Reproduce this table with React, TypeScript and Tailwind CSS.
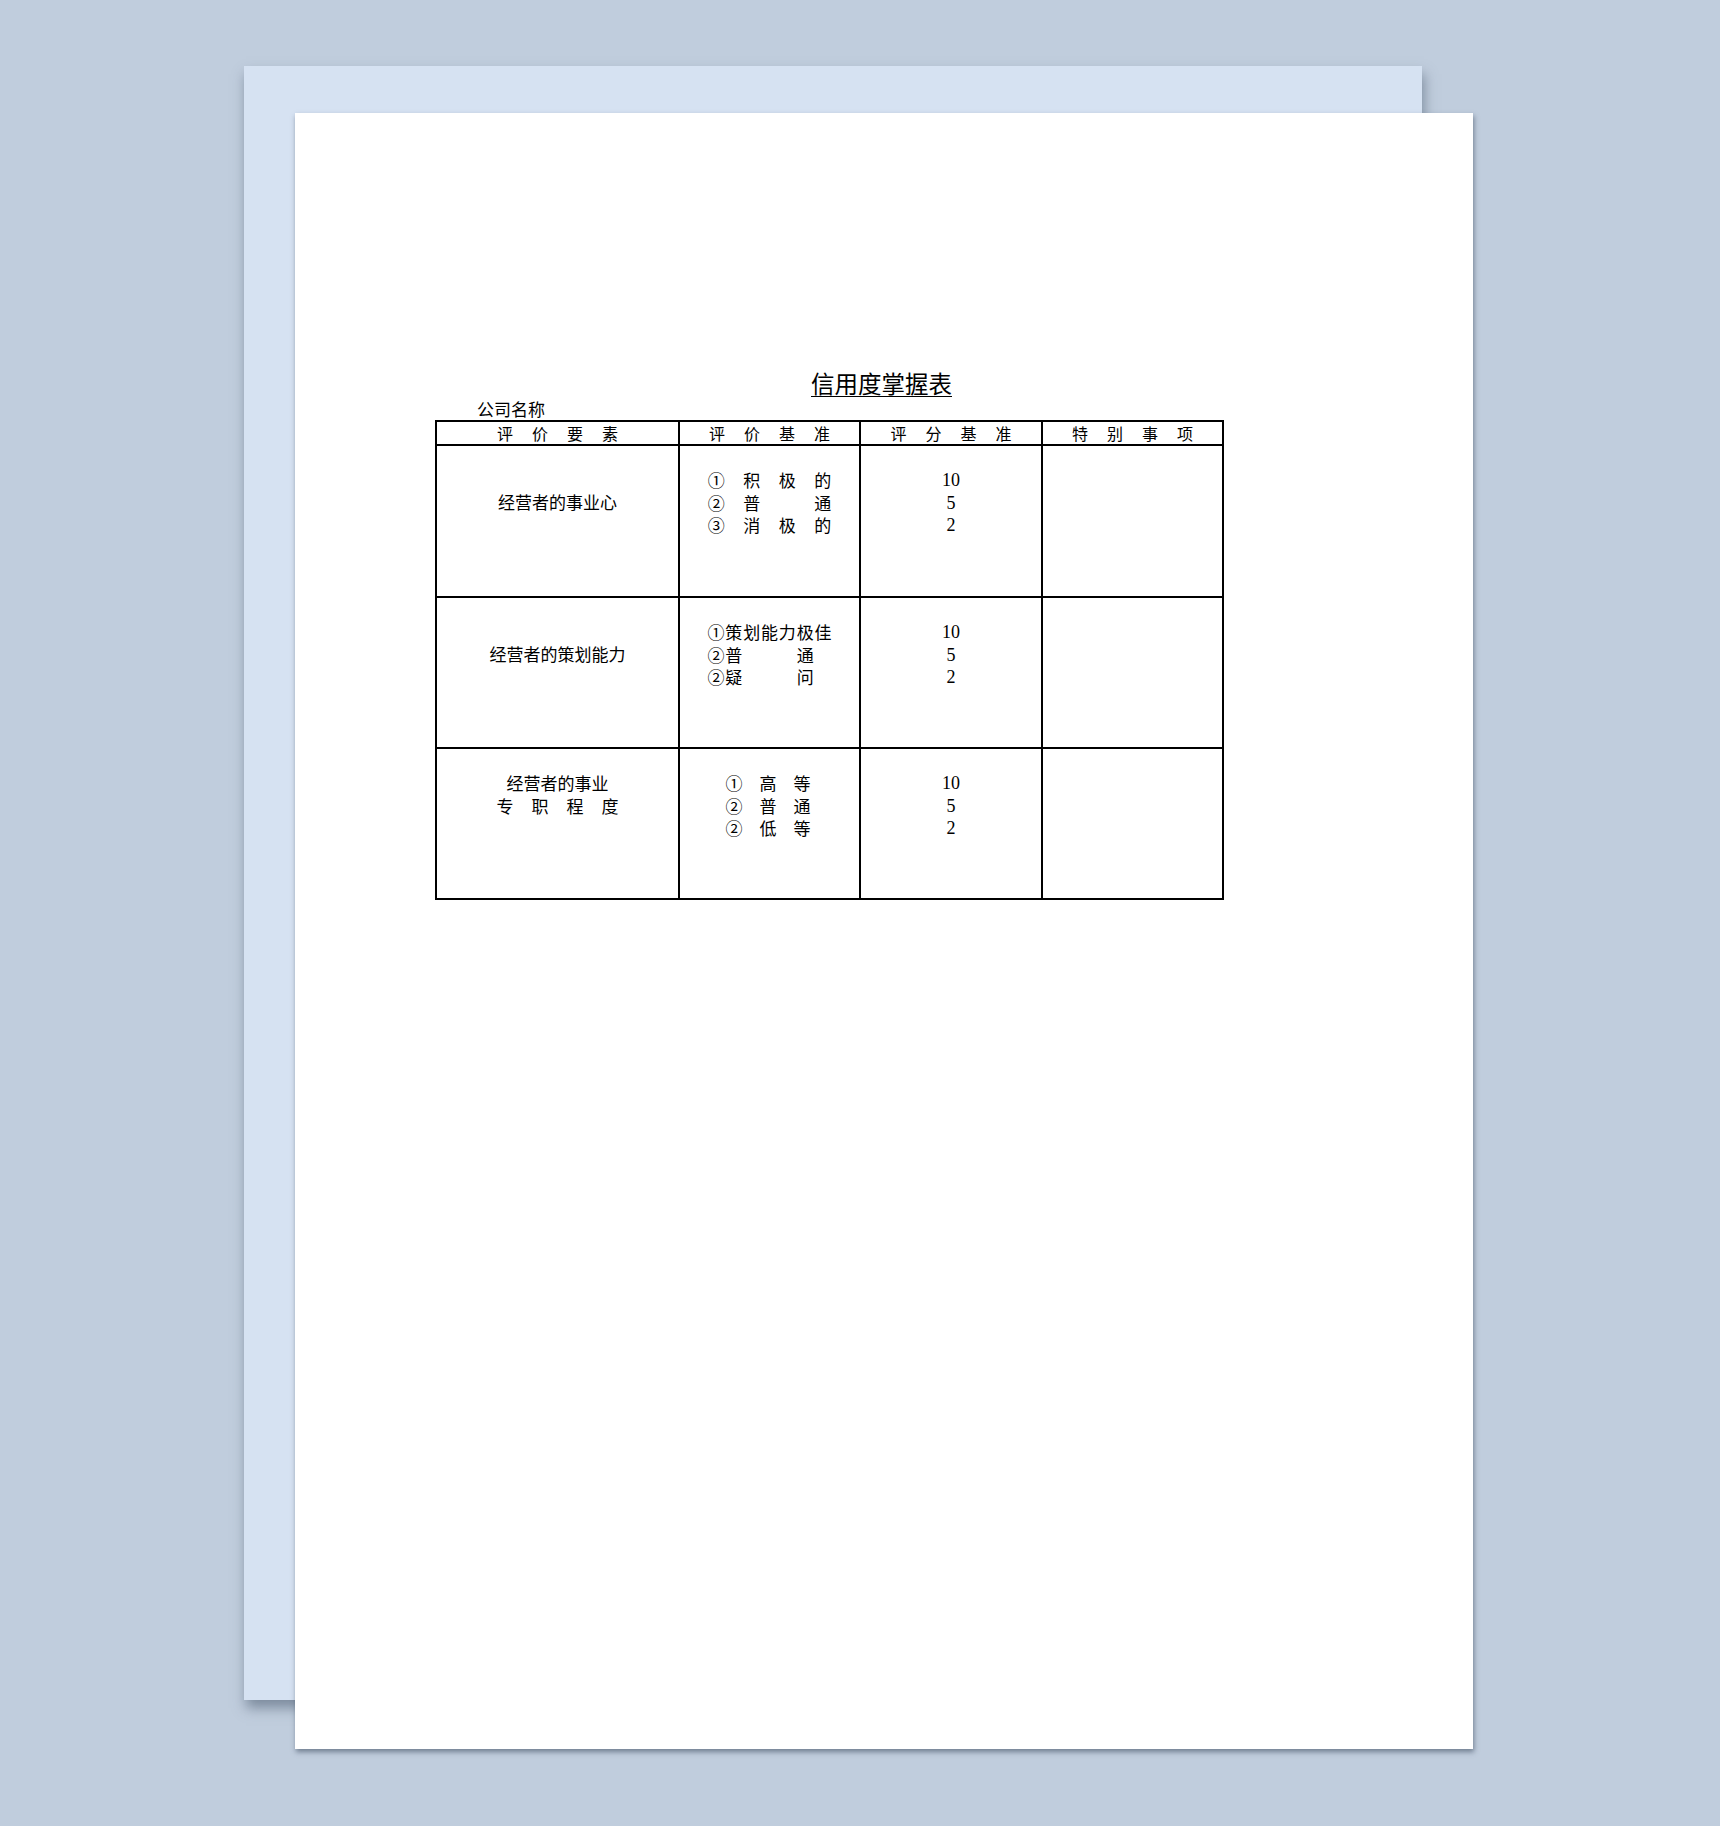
import React from "react";

const CJK = "font-['Noto_Sans_CJK_SC',sans-serif]";
const NUM = "font-['Liberation_Serif','Noto_Sans_CJK_SC',serif]";

function Spaced({ chars, cell, gap }: { chars: string[]; cell: string; gap: string }) {
  return (
    <div className={`flex ${gap}`}>
      {chars.map((c, i) => (
        <span key={i} className={`${cell} text-center`}>
          {c}
        </span>
      ))}
    </div>
  );
}

function Header({ text }: { text: string }) {
  return (
    <div className="h-[24px] border-r-2 border-b-2 border-black flex items-center justify-center text-[16px] leading-[22px]">
      <Spaced chars={text.split("")} cell="w-[16px]" gap="gap-[19px]" />
    </div>
  );
}

function Numbers({ pt }: { pt: string }) {
  return (
    <div className={`flex flex-col items-center ${pt} ${NUM} text-[18px] leading-[22.5px]`}>
      <div>10</div>
      <div>5</div>
      <div>2</div>
    </div>
  );
}

export default function App() {
  return (
    <div className={`w-[1720px] h-[1826px] bg-[#c0cddd] pt-[66px] pl-[244px] ${CJK} text-black`}>
      <div className="relative w-[1178px] h-[1634px] bg-[#d6e2f2] shadow-[2px_8px_12px_rgba(70,85,105,0.55)]">
        <div className="absolute left-[51px] top-[47px] w-[1178px] h-[1636px] bg-white shadow-[1px_3px_5px_rgba(60,75,95,0.6)] pl-[140px] pt-[256px]">
          <div className="ml-[376px] text-[23.5px] leading-[28px] underline underline-offset-[3px] decoration-1">
            信用度掌握表
          </div>
          <div className="ml-[42px] mt-[1px] text-[17px] leading-[22px]">公司名称</div>
          <div className="grid grid-cols-[243px_181px_182px_181px] w-[789px] border-l-2 border-t-2 border-black text-[17px] leading-[22.5px]">
            <Header text="评价要素" />
            <Header text="评价基准" />
            <Header text="评分基准" />
            <Header text="特别事项" />

            {/* Row 1 */}
            <div className="h-[152px] border-r-2 border-b-2 border-black flex justify-center pt-[45px]">
              <div>经营者的事业心</div>
            </div>
            <div className="h-[152px] border-r-2 border-b-2 border-black flex flex-col items-center pt-[23px]">
              <Spaced chars={["①", "积", "极", "的"]} cell="w-[17.5px]" gap="gap-[18px]" />
              <Spaced chars={["②", "普", "", "通"]} cell="w-[17.5px]" gap="gap-[18px]" />
              <Spaced chars={["③", "消", "极", "的"]} cell="w-[17.5px]" gap="gap-[18px]" />
            </div>
            <div className="h-[152px] border-r-2 border-b-2 border-black">
              <Numbers pt="pt-[23px]" />
            </div>
            <div className="h-[152px] border-r-2 border-b-2 border-black" />

            {/* Row 2 */}
            <div className="h-[151px] border-r-2 border-b-2 border-black flex justify-center pt-[45px]">
              <div>经营者的策划能力</div>
            </div>
            <div className="h-[151px] border-r-2 border-b-2 border-black flex flex-col items-center pt-[23px]">
              <Spaced chars={["①", "策", "划", "能", "力", "极", "佳"]} cell="w-[17.86px]" gap="gap-0" />
              <Spaced chars={["②", "普", "", "", "", "通", ""]} cell="w-[17.86px]" gap="gap-0" />
              <Spaced chars={["②", "疑", "", "", "", "问", ""]} cell="w-[17.86px]" gap="gap-0" />
            </div>
            <div className="h-[151px] border-r-2 border-b-2 border-black">
              <Numbers pt="pt-[23px]" />
            </div>
            <div className="h-[151px] border-r-2 border-b-2 border-black" />

            {/* Row 3 */}
            <div className="h-[151px] border-r-2 border-b-2 border-black flex flex-col items-center pt-[23px]">
              <div>经营者的事业</div>
              <Spaced chars={["专", "职", "程", "度"]} cell="w-[17px]" gap="gap-[18px]" />
            </div>
            <div className="h-[151px] border-r-2 border-b-2 border-black flex flex-col items-center pt-[23px] pr-[3px]">
              <Spaced chars={["①", "高", "等"]} cell="w-[17px]" gap="gap-[17px]" />
              <Spaced chars={["②", "普", "通"]} cell="w-[17px]" gap="gap-[17px]" />
              <Spaced chars={["②", "低", "等"]} cell="w-[17px]" gap="gap-[17px]" />
            </div>
            <div className="h-[151px] border-r-2 border-b-2 border-black">
              <Numbers pt="pt-[23px]" />
            </div>
            <div className="h-[151px] border-r-2 border-b-2 border-black" />
          </div>
        </div>
      </div>
    </div>
  );
}
